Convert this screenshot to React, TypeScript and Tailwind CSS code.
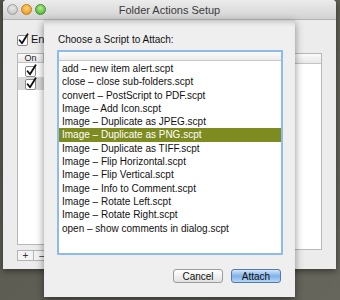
import React from "react";

const SCRIPTS = [
  "add – new item alert.scpt",
  "close – close sub-folders.scpt",
  "convert – PostScript to PDF.scpt",
  "Image – Add Icon.scpt",
  "Image – Duplicate as JPEG.scpt",
  "Image – Duplicate as PNG.scpt",
  "Image – Duplicate as TIFF.scpt",
  "Image – Flip Horizontal.scpt",
  "Image – Flip Vertical.scpt",
  "Image – Info to Comment.scpt",
  "Image – Rotate Left.scpt",
  "Image – Rotate Right.scpt",
  "open – show comments in dialog.scpt",
];

const SELECTED = 5;

function Check() {
  return (
    <svg width="13" height="13" viewBox="0 0 13 13" className="block shrink-0">
      <rect x="0.5" y="2.5" width="10" height="10" rx="1.5" fill="#fff" stroke="#8a8a8a" />
      <path d="M2.6 7.2 L5 10.2 L10.6 1.2" fill="none" stroke="#111" strokeWidth="1.8" strokeLinecap="round" strokeLinejoin="round" />
    </svg>
  );
}

function Light({ color, rim }: { color: string; rim: string }) {
  return (
    <div
      className="h-[11px] w-[11px] rounded-full border"
      style={{ background: color, borderColor: rim }}
    />
  );
}

export default function App() {
  return (
    <div
      className="relative h-[300px] w-[340px] overflow-hidden bg-gradient-to-br from-[#55554b] to-[#66665d]"
      style={{ fontFamily: '"Liberation Sans", Arial, sans-serif' }}
    >
      {/* main window */}
      <div className="absolute left-[3px] top-0 flex h-[269px] w-[333px] flex-col overflow-hidden rounded-t-[4px] bg-[#ececec] shadow-[0_2px_6px_rgba(0,0,0,0.45)]">
        <div className="relative flex h-[20px] shrink-0 items-center border-b border-[#b4b4b4] bg-gradient-to-b from-[#ececec] to-[#d2d2d2] pl-[4px]">
          <div className="flex gap-[3px]">
            <Light color="radial-gradient(circle at 50% 35%, #e8e8e8, #bdbdbd)" rim="#9d9d9d" />
            <Light color="radial-gradient(circle at 50% 35%, #ffd27a, #e4900f)" rim="#c07a12" />
            <Light color="radial-gradient(circle at 50% 35%, #b6ec8a, #3fa72c)" rim="#3d8c2b" />
          </div>
          <div className="absolute inset-x-0 top-[4px] text-center text-[11px] leading-[13px] text-[#3a3a3a]">
            Folder Actions Setup
          </div>
        </div>

        <div className="flex flex-1 flex-col px-[14px] pt-[13px]">
          <div className="flex items-center gap-[1px] text-[11px] leading-[13px] text-[#111]">
            <Check />
            <span>Enable Folder Actions</span>
          </div>

          <div className="mt-[7px] flex gap-[10px]">
            <div className="flex w-[150px] flex-col">
              <div className="h-[192px] border border-[#b8b8b8] bg-white">
                <div className="flex h-[9px] border-b border-[#c4c4c4] bg-gradient-to-b from-[#fbfbfb] to-[#e8e8e8] text-[9px] leading-[8px] text-[#222]">
                  <div className="w-[26px] border-r border-[#c4c4c4] text-center">On</div>
                </div>
                <div className="flex h-[14px] items-center">
                  <div className="flex w-[26px] justify-center">
                    <Check />
                  </div>
                </div>
                <div className="flex h-[13px] items-center bg-[#d9d9d9]">
                  <div className="flex w-[26px] justify-center">
                    <Check />
                  </div>
                </div>
              </div>
              <div className="mt-[5px] flex">
                <div className="flex h-[11px] w-[17px] items-center justify-center border border-[#b4b4b4] bg-[#f4f4f4] text-[10px] text-[#333]">
                  +
                </div>
                <div className="flex h-[11px] w-[17px] items-center justify-center border border-l-0 border-[#b4b4b4] bg-[#f4f4f4] text-[10px] text-[#333]">
                  –
                </div>
              </div>
            </div>
            <div className="h-[197px] flex-1 border border-[#b8b8b8] bg-white">
              <div className="h-[10px] border-b border-[#c4c4c4] bg-gradient-to-b from-[#fbfbfb] to-[#e8e8e8]" />
            </div>
          </div>
        </div>
      </div>

      {/* attach sheet */}
      <div className="absolute left-[44px] top-[20px] flex h-[277px] w-[251px] flex-col bg-[#efefef] shadow-[0_3px_8px_rgba(0,0,0,0.45),inset_0_6px_6px_-5px_rgba(0,0,0,0.25)]">
        <div className="pl-[14px] pt-[14px] text-[10px] leading-[12px] text-[#111]">
          Choose a Script to Attach:
        </div>
        <div className="ml-[13px] mt-[4px] h-[205px] w-[226px] rounded-[1px] border-2 border-[#8fbbea] bg-white">
          <div className="h-[9px] border-b border-[#c8c8c8] bg-gradient-to-b from-[#fbfbfb] to-[#ececec]" />
          <div className="pt-[1px]">
            {SCRIPTS.map((name, i) => (
              <div
                key={name}
                className={`h-[13.3px] pl-[3px] text-[10px] leading-[13.3px] ${
                  i === SELECTED ? "bg-[#7e8b21] text-white" : "text-[#111]"
                }`}
              >
                {name}
              </div>
            ))}
          </div>
        </div>
        <div className="mr-[14px] mt-[14px] flex justify-end gap-[8px]">
          <div className="flex h-[14px] w-[50px] items-center justify-center rounded-[3px] border border-[#9c9c9c] bg-gradient-to-b from-[#ffffff] to-[#e2e2e2] text-[10px] text-[#111]">
            Cancel
          </div>
          <div className="flex h-[14px] w-[50px] items-center justify-center rounded-[3px] border border-[#5478a8] bg-gradient-to-b from-[#d3e6f9] via-[#7fb2ea] to-[#b5d6f5] text-[10px] text-[#111]">
            Attach
          </div>
        </div>
      </div>
    </div>
  );
}
